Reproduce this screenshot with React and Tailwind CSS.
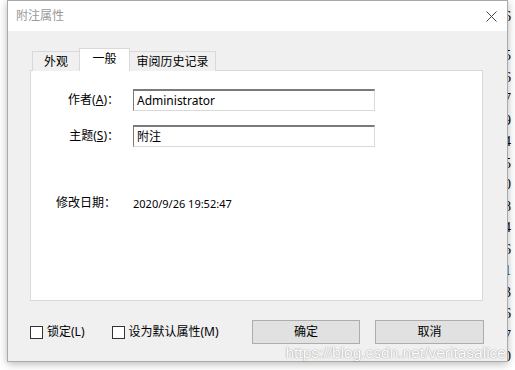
import React from "react";

const FONT = "font-['Segoe_UI','Noto_Sans','Noto_Sans_CJK_SC',sans-serif]";

function Check({ label }) {
  return (
    <div className="flex items-center gap-[4px]">
      <div className="w-[13px] h-[13px] border border-[#333333] bg-white" />
      <span className="text-[12px] leading-none text-black">{label}</span>
    </div>
  );
}

function Btn({ children, w }) {
  return (
    <div
      className={`h-[24px] ${w} border border-[#adadad] bg-[#e1e1e1] flex items-center justify-center text-[12px] text-black`}
    >
      {children}
    </div>
  );
}

function Field({ value }) {
  return (
    <div className="w-[242px] h-[22px] bg-white border border-[#d9d9d9] border-t-[#7a7a7a] border-l-[#7a7a7a] border-t-2 flex items-center pl-[3px] text-[12px] text-black leading-none">
      {value}
    </div>
  );
}

const digits = ["6", "5", "6", "7", "9", "4", "5", "0", "8", "4", "6", "1", "3", "6", "7", "0"];

export default function App() {
  return (
    <div className={`w-[515px] h-[370px] bg-white overflow-hidden flex ${FONT}`}>
      <div className="w-[7px] shrink-0" />
      <div className="w-[501px] h-[362px] shrink-0 border border-[#aaaaaa] shadow-[0_2px_8px_rgba(0,0,0,0.28)] flex flex-col relative z-10 bg-[#f0f0f0]">
        {/* title bar */}
        <div className="h-[30px] bg-white flex items-center justify-between pl-[8px] pr-[10px]">
          <span className="text-[12px] text-[#9a9a9a] leading-none">附注属性</span>
          <svg width="11" height="11" viewBox="0 0 11 11">
            <path d="M0.5 0.5 L10.5 10.5 M10.5 0.5 L0.5 10.5" stroke="#444" strokeWidth="1" />
          </svg>
        </div>
        {/* body */}
        <div className="flex-1 flex flex-col pl-[22px] pr-[24px] pt-[17px]">
          {/* tabs */}
          <div className="flex items-end h-[23px] pl-[2px] relative z-10 -mb-px">
            <div className="w-[48px] h-[20px] border border-[#d9d9d9] border-b-0 bg-[#f0f0f0] flex items-center justify-center text-[12px] text-black leading-none pt-[1px]">
              外观
            </div>
            <div className="w-[51px] h-[23px] -ml-px border border-[#d9d9d9] border-b-0 bg-white flex items-center justify-center text-[12px] text-black leading-none pb-[3px]">
              一般
            </div>
            <div className="w-[87px] h-[20px] -ml-px border border-[#d9d9d9] border-b-0 bg-[#f0f0f0] flex items-center justify-center text-[12px] text-black leading-none pt-[1px]">
              审阅历史记录
            </div>
          </div>
          {/* panel */}
          <div className="h-[231px] bg-white border border-[#d9d9d9] flex flex-col pt-[18px]">
            <div className="flex items-center">
              <div className="w-[88px] text-right text-[12px] text-black leading-none">
                作者(<span className="underline">A</span>)：
              </div>
              <div className="ml-[14px]">
                <Field value="Administrator" />
              </div>
            </div>
            <div className="flex items-center mt-[14px]">
              <div className="w-[88px] text-right text-[12px] text-black leading-none">
                主题(<span className="underline">S</span>)：
              </div>
              <div className="ml-[14px]">
                <Field value="附注" />
              </div>
            </div>
            <div className="flex items-center mt-[50px]">
              <div className="w-[88px] pl-[25px] text-[12px] text-black leading-none">修改日期：</div>
              <div className="ml-[14px] text-[11px] text-black leading-none">2020/9/26 19:52:47</div>
            </div>
          </div>
          {/* bottom row */}
          <div className="flex items-center mt-[19px]">
            <Check label="锁定(L)" />
            <div className="w-[27px]" />
            <Check label="设为默认属性(M)" />
            <div className="ml-auto flex gap-[15px] -mr-px">
              <Btn w="w-[108px]">确定</Btn>
              <Btn w="w-[109px]">取消</Btn>
            </div>
          </div>
          <div className="flex justify-end mt-[1px] -mr-[23px]">
            <span className="font-['Liberation_Sans',Arial,sans-serif] text-[15.5px] leading-[16px] text-white [text-shadow:0_0_1px_rgba(0,0,0,0.35),0_0_2px_rgba(0,0,0,0.2)]">
              https://blog.csdn.net/veritasalice
            </span>
          </div>
        </div>
      </div>
      {/* clipped column of digits behind */}
      <div className="w-[7px] shrink-0 overflow-hidden flex flex-col font-['Liberation_Serif',serif] text-[14px] text-black">
        <div className="h-[9px]" />
        <div className="h-[16px] leading-[16px] -ml-[4px]">{digits[0]}</div>
        <div className="h-[20px]" />
        {digits.slice(1).map((d, i) => (
          <div key={i} className="h-[21.5px] leading-[21.5px] -ml-[4px]">
            {d}
          </div>
        ))}
      </div>
    </div>
  );
}
